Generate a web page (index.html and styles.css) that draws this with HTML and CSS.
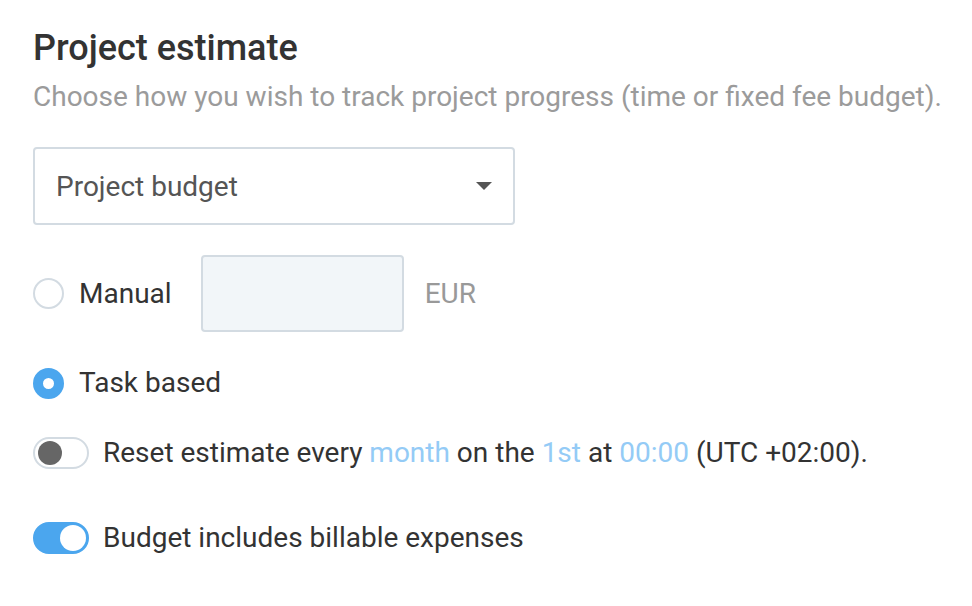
FILE: index.html
```html
<!DOCTYPE html>
<html lang="en">
<head>
    <meta charset="UTF-8">
    <meta name="viewport" content="width=device-width, initial-scale=1.0">
    <title>Project estimate</title>
    <link rel="stylesheet" href="styles.css">
</head>
<body>
    <div class="estimate">
        <h1 class="title">Project estimate</h1>
        <p class="subtitle">Choose how you wish to track project progress (time or fixed fee budget).</p>

        <div class="select">
            <span class="select-value">Project budget</span>
            <span class="caret"></span>
        </div>

        <div class="option manual">
            <span class="radio"></span>
            <span class="label">Manual</span>
            <span class="amount"></span>
            <span class="currency">EUR</span>
        </div>

        <div class="option task">
            <span class="radio checked"></span>
            <span class="label">Task based</span>
        </div>

        <div class="switch-row reset">
            <span class="switch"><span class="knob"></span></span>
            <span class="label">Reset estimate every <a class="link">month</a> on the <a class="link">1st</a> at <a class="link">00:00</a> (UTC +02:00).</span>
        </div>

        <div class="switch-row expenses">
            <span class="switch on"><span class="knob"></span></span>
            <span class="label">Budget includes billable expenses</span>
        </div>
    </div>
</body>
</html>
```

FILE: styles.css
```css
body {
    font-family: Roboto, "Liberation Sans", Arial, sans-serif;
    margin: 0;
    padding: 28px 0 0 33px;
    background-color: #fff;
    color: #333;
}
.estimate {
    display: flex;
    flex-direction: column;
    align-items: flex-start;
}
.title {
    margin: 0;
    font-size: 36px;
    line-height: 40px;
    font-weight: 500;
    color: #333;
}
.subtitle {
    margin: 12px 0 0;
    font-size: 28px;
    line-height: 34px;
    color: #9b9b9b;
}
.select {
    box-sizing: border-box;
    width: 482px;
    height: 78px;
    margin-top: 33px;
    padding: 0 21px 0 21px;
    border: 2px solid #d3dbe2;
    border-radius: 4px;
    display: flex;
    align-items: center;
    justify-content: space-between;
}
.select-value {
    font-size: 28px;
    color: #555;
}
.caret {
    width: 0;
    height: 0;
    border-left: 8px solid transparent;
    border-right: 8px solid transparent;
    border-top: 8px solid #555;
}
.option {
    display: flex;
    align-items: center;
}
.manual {
    margin-top: 30px;
}
.task {
    margin-top: 35px;
}
.radio {
    box-sizing: border-box;
    width: 31px;
    height: 31px;
    border: 2px solid #d3dbe2;
    border-radius: 50%;
    background-color: #fff;
}
.radio.checked {
    border: 10px solid #4ba6ee;
}
.label {
    font-size: 28px;
    line-height: 32px;
    color: #333;
}
.option .label {
    margin-left: 15px;
}
.amount {
    box-sizing: border-box;
    width: 203px;
    height: 77px;
    margin-left: 29px;
    background-color: #f2f6f9;
    border: 2px solid #d3dbe2;
    border-radius: 4px;
}
.currency {
    margin-left: 21px;
    font-size: 28px;
    color: #999;
}
.switch-row {
    display: flex;
    align-items: center;
}
.reset {
    margin-top: 38px;
}
.expenses {
    margin-top: 53px;
}
.switch-row .label {
    margin-left: 14px;
}
.switch {
    box-sizing: border-box;
    width: 56px;
    height: 32px;
    padding: 0 3px;
    border: 2px solid #d3dbe2;
    border-radius: 16px;
    background-color: #fff;
    display: flex;
    align-items: center;
}
.knob {
    width: 24px;
    height: 24px;
    border-radius: 50%;
    background-color: #666;
}
.switch.on {
    border-color: #4ba6ee;
    background-color: #4ba6ee;
    justify-content: flex-end;
    padding: 0 1px;
}
.switch.on .knob {
    width: 26px;
    height: 26px;
    background-color: #fff;
}
.link {
    color: #94cbf6;
    cursor: pointer;
}
```
